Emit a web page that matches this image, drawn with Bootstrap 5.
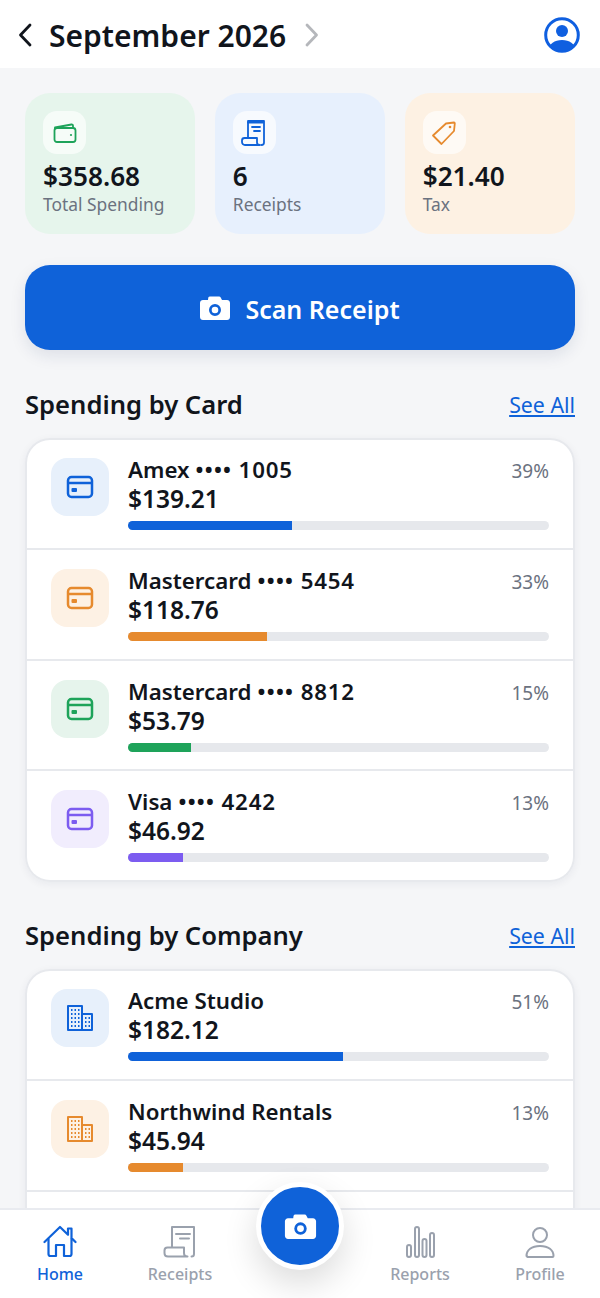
<!DOCTYPE html>
<html lang="en">
<head>
  <meta charset="UTF-8">
  <meta name="viewport" content="width=device-width, initial-scale=1.0">
  <title>Receipts</title>
  <link href="https://cdn.jsdelivr.net/npm/bootstrap@5.3.0/dist/css/bootstrap.min.css" rel="stylesheet">
  <style>
    html, body { height: 100%; }
    body {
      font-family: "Noto Sans", "Open Sans", sans-serif;
      background: #f5f6f8;
      color: #11151c;
      overflow: hidden;
    }
    .app-shell { height: 1298px; position: relative; }
    .top-bar { height: 68px; padding: 2px 20px 0 18px; flex: none; }
    .month-title { font-size: 30px; font-weight: 600; line-height: 1; margin: 0 19px 0 17px; padding-top: 2px; }
    .page-body { padding: 25px 25px 0; overflow: hidden; min-height: 0; }
    .stat-row { gap: 19.5px; margin-bottom: 31px; }
    .stat-tile { flex: 1 1 0; height: 141px; border-radius: 25px; padding: 18px; }
    .tile-green { background: #e6f5ec; }
    .tile-blue { background: #e7f0fd; }
    .tile-orange { background: #fdf1e3; }
    .tile-icon { width: 43px; height: 43px; border-radius: 14px; background: rgba(255,255,255,.65); margin-bottom: 7px; }
    .stat-value { font-size: 26.2px; font-weight: 600; line-height: 30px; }
    .stat-label { font-size: 17.4px; line-height: 24px; margin-top: 1px; color: #6b7280; }
    .scan-btn {
      height: 85px; border-radius: 25px; background: #0f62d9; border: 0; color: #fff;
      font-size: 25px; font-weight: 600; gap: 15px; width: 100%; padding: 0;
      box-shadow: 0 6px 16px rgba(15,40,90,.1);
    }
    .scan-btn:hover { background: #0f62d9; color: #fff; }
    .scan-text { padding-top: 4px; }
    .section-head { margin: 37px 0 17px; height: 34px; }
    .section-head.next-section { margin-top: 36px; }
    .section-head h2 { font-size: 25.6px; font-weight: 600; margin: 2px 0 0; }
    .section-head a { font-size: 21.3px; color: #0f62d9; margin-top: 2px; }
    .spend-list { border-radius: 25px; box-shadow: 0 2px 8px rgba(20,30,60,.06); --bs-list-group-color: #11151c; --bs-list-group-border-color: #e7e9ed; --bs-list-group-border-width: 2px; }
    .spend-list .list-group-item { height: 110.7px; padding: 19px 24px 0 24px; gap: 19px; }
    .spend-list .list-group-item:first-child { height: 112px; padding-top: 18px; }
    .spend-icon { width: 58px; height: 58px; border-radius: 16px; flex: none; }
    .icon-blue { background: #e7f0fb; color: #0f62d9; }
    .icon-orange { background: #fdf1e4; color: #e68a2e; }
    .icon-green { background: #e6f4ec; color: #1ea35a; }
    .icon-purple { background: #f1edfd; color: #7c5cf0; }
    .spend-text { margin-top: -2px; }
    .spend-name { font-size: 22.3px; font-weight: 600; line-height: 27px; }
    .card-mask { letter-spacing: .8px; }
    .spend-pct { font-size: 19px; line-height: 27px; margin-top: 2px; color: #6b7280; }
    .spend-amt { font-size: 24.5px; font-weight: 600; line-height: 27px; }
    .spend-bar { height: 9px; border-radius: 5px; background: #e6e8ec; margin-top: 9px; }
    .bar-blue { background: #0f62d9; }
    .bar-orange { background: #e68a2e; }
    .bar-green { background: #1ea35a; }
    .bar-purple { background: #7c5cf0; }
    .tab-bar { height: 90px; flex: none; border-top: 2px solid #e9ebf0; }
    .tab-item { flex: 1 1 0; color: #9aa1ad; font-size: 16px; font-weight: 500; padding-top: 15px; text-decoration: none; }
    .tab-item.active { color: #0f62d9; }
    .tab-label { line-height: 22px; margin-top: 4px; }
    .fab {
      position: absolute; left: 256px; top: 1182px; width: 88px; height: 88px;
      border-radius: 50%; background: #0f62d9; border: 5px solid #fff; color: #fff;
      box-shadow: 0 14px 34px rgba(0,0,0,.14);
    }
  </style>
</head>
<body>
<div class="app-shell d-flex flex-column">

  <header class="top-bar bg-white d-flex align-items-center">
    <svg width="14" height="24" viewBox="0 0 14 24" fill="none" stroke="#11151c" stroke-width="2.8" stroke-linecap="round" stroke-linejoin="round"><path d="M12 2 2.500 12 12 22"/></svg>
    <div class="month-title">September 2026</div>
    <svg width="14" height="24" viewBox="0 0 14 24" fill="none" stroke="#b5b7bb" stroke-width="2.8" stroke-linecap="round" stroke-linejoin="round"><path d="M2 2 11.500 12 2 22"/></svg>
    <svg class="ms-auto" width="36" height="36" viewBox="0 0 36 36"><defs><clipPath id="avatarClip"><circle cx="18" cy="18" r="16"/></clipPath></defs><circle cx="18" cy="18" r="16.300" fill="none" stroke="#0f5fe0" stroke-width="3"/><circle cx="18" cy="14" r="6" fill="#0f5fe0"/><path clip-path="url(#avatarClip)" d="M4 36c0-9 6-13 14-13s14 4 14 13z" fill="#0f5fe0"/></svg>
  </header>

  <main class="page-body flex-grow-1">
    <div class="stat-row d-flex">
      <div class="stat-tile tile-green">
        <div class="tile-icon d-flex align-items-center justify-content-center">
          <svg width="24" height="24" viewBox="0 0 24 24" fill="none" stroke="#1ea35a" stroke-width="1.800" stroke-linejoin="round"><path d="M2 8V6.500L18.500 3.500c.8-.1 1.500.4 1.500 1.300V7"/><rect x="1.500" y="7" width="21" height="14" rx="2.500"/><circle cx="18" cy="14" r="1.100" fill="#1ea35a" stroke="none"/></svg>
        </div>
        <div class="stat-value">$358.68</div>
        <div class="stat-label">Total Spending</div>
      </div>
      <div class="stat-tile tile-blue">
        <div class="tile-icon d-flex align-items-center justify-content-center">
          <svg width="26" height="28" viewBox="0 0 26 28" fill="none" stroke="#0f62d9" stroke-width="1.800" stroke-linejoin="round" stroke-linecap="round"><path d="M7 19V2h16v21.500c0 1.500-1 2.500-2.500 2.500"/><path d="M7 3.500h16" stroke-dasharray="1 1"/><path d="M11 8h8M13 12h6"/><path d="M3.500 19H16v4.500c0 1.500 1.500 2.500 3 2.500H4c-1.800 0-3-1.200-3-3v-1.500c0-1.500 1-2.500 2.500-2.500z"/></svg>
        </div>
        <div class="stat-value">6</div>
        <div class="stat-label">Receipts</div>
      </div>
      <div class="stat-tile tile-orange">
        <div class="tile-icon d-flex align-items-center justify-content-center">
          <svg width="26" height="26" viewBox="0 0 26 26" fill="none" stroke="#e68a2e" stroke-width="1.800" stroke-linejoin="round"><path d="M15 3.500 23 2.500c.5 0 .9.400.8 1L23 11 10.500 24 2 15.500z"/><circle cx="19" cy="7" r="1.300" fill="#e68a2e" stroke="none"/></svg>
        </div>
        <div class="stat-value">$21.40</div>
        <div class="stat-label">Tax</div>
      </div>
    </div>

    <button class="btn scan-btn d-flex align-items-center justify-content-center" type="button">
      <svg width="30" height="26" viewBox="0 0 30 26"><path fill-rule="evenodd" fill="#fff" d="M10 1.500h9c.8 0 1.400.4 1.700 1.100L22 5h5c1.700 0 3 1.300 3 3v14c0 1.700-1.300 3-3 3H3c-1.700 0-3-1.300-3-3V8c0-1.700 1.300-3 3-3h5l.3-2.400C8.600 1.900 9.200 1.500 10 1.500zM15 9a6 6 0 1 0 0 12 6 6 0 0 0 0-12zm0 2.700a3.300 3.300 0 1 1 0 6.600 3.300 3.300 0 0 1 0-6.600z"/></svg>
      <span class="scan-text">Scan Receipt</span>
    </button>

    <div class="section-head d-flex justify-content-between align-items-center">
      <h2>Spending by Card</h2>
      <a href="#">See All</a>
    </div>
    <div class="list-group spend-list" id="cardList"></div>

    <div class="section-head next-section d-flex justify-content-between align-items-center">
      <h2>Spending by Company</h2>
      <a href="#">See All</a>
    </div>
    <div class="list-group spend-list" id="companyList"></div>
  </main>

  <nav class="tab-bar bg-white d-flex">
    <a class="tab-item active d-flex flex-column align-items-center" href="#">
      <svg width="34" height="34" viewBox="0 0 34 34" fill="none" stroke="currentColor" stroke-width="2.200" stroke-linejoin="round" stroke-linecap="round"><path d="M1.500 17 17 2l8 7.700V3.500h3.500v9.600L32.500 17"/><path d="M5.500 14v15c0 1.200.8 2 2 2H13V20h8v11h5.500c1.200 0 2-.8 2-2V14"/></svg>
      <span class="tab-label">Home</span>
    </a>
    <a class="tab-item d-flex flex-column align-items-center" href="#">
      <svg width="34" height="34" viewBox="0 0 34 34" fill="none" stroke="currentColor" stroke-width="2" stroke-linejoin="round" stroke-linecap="round"><path d="M9 22V2h22v27c0 1.500-1 2.500-2.500 2.500"/><path d="M13 9h14M17 13.500h9"/><path d="M4.500 22.500H21v5.500c0 2 1.500 3.500 3.500 3.500H5c-2.200 0-3.500-1.500-3.500-3.500v-2.500c0-1.800 1.200-3 3-3z"/></svg>
      <span class="tab-label">Receipts</span>
    </a>
    <div class="tab-item"></div>
    <a class="tab-item d-flex flex-column align-items-center" href="#">
      <svg width="34" height="34" viewBox="0 0 34 34" fill="none" stroke="currentColor" stroke-width="2"><rect x="4" y="20" width="4" height="12" rx="2"/><rect x="12" y="2" width="4" height="30" rx="2"/><rect x="19.500" y="14" width="4" height="18" rx="2"/><rect x="27" y="8" width="4" height="24" rx="2"/></svg>
      <span class="tab-label">Reports</span>
    </a>
    <a class="tab-item d-flex flex-column align-items-center" href="#">
      <svg width="34" height="34" viewBox="0 0 34 34" fill="none" stroke="currentColor" stroke-width="2" stroke-linejoin="round"><circle cx="17" cy="10" r="7"/><path d="M3.500 31c0-6 5-10 13.500-10s13.500 4 13.500 10c0 .5-.3 1-1 1h-25c-.2 0-.5-.5-.5-1z"/></svg>
      <span class="tab-label">Profile</span>
    </a>
  </nav>

  <div class="fab d-flex align-items-center justify-content-center">
    <svg width="33" height="27" viewBox="0 0 30 26"><path fill-rule="evenodd" fill="#fff" d="M10 1.500h9c.8 0 1.400.4 1.700 1.100L22 5h5c1.700 0 3 1.300 3 3v14c0 1.700-1.300 3-3 3H3c-1.700 0-3-1.300-3-3V8c0-1.700 1.300-3 3-3h5l.3-2.400C8.600 1.900 9.200 1.500 10 1.500zM15 9a6 6 0 1 0 0 12 6 6 0 0 0 0-12zm0 2.700a3.300 3.300 0 1 1 0 6.600 3.300 3.300 0 0 1 0-6.600z"/></svg>
  </div>
</div>

<script src="https://cdn.jsdelivr.net/npm/bootstrap@5.3.0/dist/js/bootstrap.bundle.min.js"></script>
<script>
  const cardIcon = '<svg width="28" height="24" viewBox="0 0 28 24" fill="none" stroke="currentColor" stroke-width="2.500"><rect x="2" y="2" width="24" height="20" rx="3.500"/><path d="M2 8h24"/><rect x="5.500" y="13" width="5.500" height="4" rx="1" fill="currentColor" stroke="none"/></svg>';
  const buildingIcon = '<svg width="28" height="28" viewBox="0 0 28 28" fill="none" stroke="currentColor" stroke-width="2" stroke-linejoin="round"><path d="M2 26V2h14v24z"/><path d="M16 10h10v16H2"/><path d="M5 6h1.500M8.500 6H10M12 6h1.500M5 10h1.500M8.500 10H10M12 10h1.500M5 14h1.500M8.500 14H10M12 14h1.500M5 18h1.500M8.500 18H10M12 18h1.500M5 22h1.500M8.500 22H10M12 22h1.500M19 14h1.500M22.500 14H24M19 18h1.500M22.500 18H24M19 22h1.500M22.500 22H24"/></svg>';

  const cards = [
    { name: 'Amex <span class="card-mask">•••• 1005</span>', amount: '$139.21', pct: 39, tone: 'blue' },
    { name: 'Mastercard <span class="card-mask">•••• 5454</span>', amount: '$118.76', pct: 33, tone: 'orange' },
    { name: 'Mastercard <span class="card-mask">•••• 8812</span>', amount: '$53.79', pct: 15, tone: 'green' },
    { name: 'Visa <span class="card-mask">•••• 4242</span>', amount: '$46.92', pct: 13, tone: 'purple' }
  ];
  const companies = [
    { name: 'Acme Studio', amount: '$182.12', pct: 51, tone: 'blue' },
    { name: 'Northwind Rentals', amount: '$45.94', pct: 13, tone: 'orange' }
  ];

  function rowHtml(item, icon) {
    return `
      <div class="list-group-item d-flex">
        <div class="spend-icon icon-${item.tone} d-flex align-items-center justify-content-center">${icon}</div>
        <div class="flex-grow-1 spend-text">
          <div class="d-flex justify-content-between">
            <div class="spend-name">${item.name}</div>
            <div class="spend-pct">${item.pct}%</div>
          </div>
          <div class="spend-amt">${item.amount}</div>
          <div class="progress spend-bar"><div class="progress-bar bar-${item.tone}" style="width: ${item.pct}%"></div></div>
        </div>
      </div>`;
  }

  document.getElementById('cardList').innerHTML = cards.map(c => rowHtml(c, cardIcon)).join('');
  // third company row runs under the tab bar, only its top edge shows
  document.getElementById('companyList').innerHTML = companies.map(c => rowHtml(c, buildingIcon)).join('') + '<div class="list-group-item"></div>';
</script>
</body>
</html>
